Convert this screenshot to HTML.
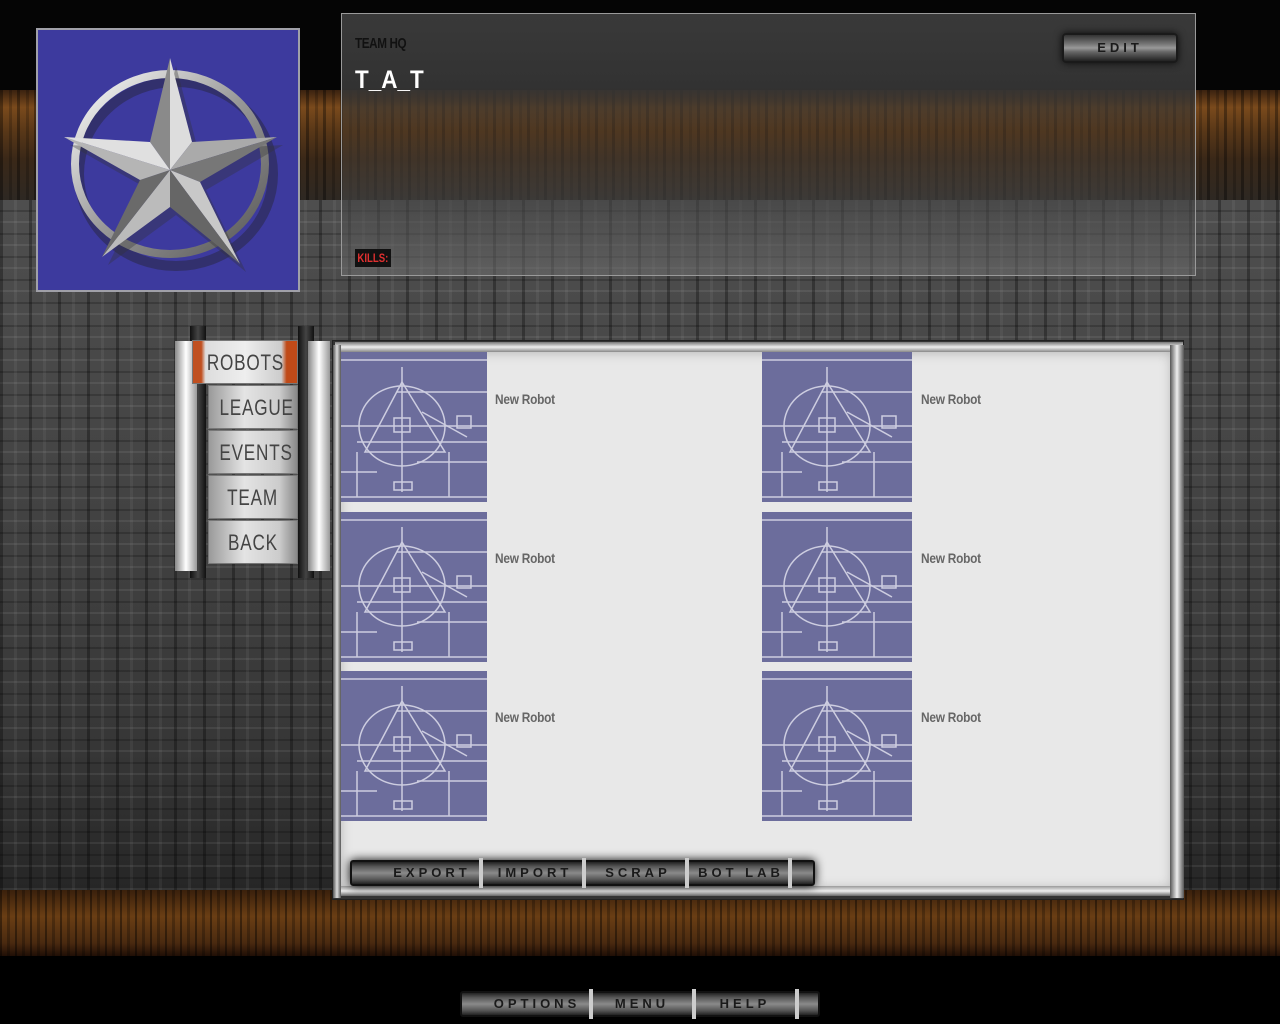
<!DOCTYPE html>
<html><head><meta charset="utf-8">
<style>
*{margin:0;padding:0;box-sizing:border-box}
body{width:1280px;height:1024px;background:#000;position:relative;overflow:hidden;font-family:"Liberation Sans",sans-serif}
.abs{position:absolute}
#bgtop{left:0;top:0;width:1280px;height:90px;background:#050505}
#band1{left:0;top:90px;width:1280px;height:115px;background:
repeating-linear-gradient(90deg,rgba(0,0,0,.35) 0 3px,transparent 3px 9px,rgba(0,0,0,.2) 9px 12px,transparent 12px 17px),
linear-gradient(180deg,#3a2210 0%,#7a4a1c 15%,#5a3818 35%,#3a2818 60%,#2c2824 100%)}
#circ{left:0;top:200px;width:1280px;height:690px;background:
repeating-linear-gradient(90deg,rgba(0,0,0,.3) 0 3px,transparent 3px 14px,rgba(255,255,255,.05) 14px 17px,transparent 17px 29px),
repeating-linear-gradient(0deg,rgba(255,255,255,.07) 0 2px,transparent 2px 11px,rgba(0,0,0,.2) 11px 13px,transparent 13px 23px),
linear-gradient(180deg,#4e4e4e 0%,#444 40%,#363636 80%,#262626 100%)}
#band2{left:0;top:890px;width:1280px;height:66px;background:
repeating-linear-gradient(90deg,rgba(0,0,0,.4) 0 2px,transparent 2px 7px,rgba(0,0,0,.25) 7px 10px,transparent 10px 15px),
linear-gradient(180deg,#3a200c,#6a3e14 40%,#4a2a10 80%,#200f06)}
#logo{left:36px;top:28px;width:264px;height:264px;background:#3d3a9e;border:2px solid #a0a0a8}
#hq{left:341px;top:13px;width:855px;height:263px;border:1px solid #9a9a9a;background:linear-gradient(180deg,rgba(60,60,60,.95) 0%,rgba(55,55,55,.9) 28%,rgba(70,55,40,.55) 45%,rgba(70,70,70,.6) 72%,rgba(110,110,110,.55) 100%)}
#hq .t1{position:absolute;left:13px;top:21px;font-size:15px;font-weight:bold;color:#111;letter-spacing:-.5px;transform:scaleX(.78);transform-origin:left}
#hq .t2{position:absolute;left:13px;top:52px;font-size:25px;font-weight:bold;color:#fff;transform:scaleX(.9);transform-origin:left}
#hq .k{position:absolute;left:13px;top:235px;background:#111;color:#e03030;font-size:12px;font-weight:bold;padding:2px 3px;transform:scaleX(.8);transform-origin:left}
.btn{background:linear-gradient(180deg,#333,#777 35%,#999 50%,#666 65%,#222);border:2px solid #1a1a1a;border-radius:4px;color:#1a1a1a;font-weight:bold;font-size:13px;letter-spacing:4px;text-align:center;box-shadow:0 0 8px rgba(0,0,0,.8)}
#edit{left:1062px;top:33px;width:116px;height:30px;line-height:26px}
#menu{left:170px;top:326px;width:165px;height:252px}
.rail{position:absolute;top:0;width:16px;height:252px;background:linear-gradient(90deg,#111,#444,#111)}
.post{position:absolute;top:15px;width:22px;height:230px;background:linear-gradient(90deg,#888,#fff 50%,#999)}
.mi{position:absolute;left:38px;width:90px;height:44px;background:linear-gradient(90deg,#9a9a9a,#e4e4e4 40%,#ccc 80%,#888);border:1px solid #777;color:#444;font-size:22px;text-align:center;line-height:44px;overflow:hidden}
.mi b{display:inline-block;font-weight:normal;transform:scaleX(.78);letter-spacing:1px}
#panel{left:332px;top:340px;width:852px;height:560px;background:#333;border:1px solid #222}
#inner{left:340px;top:352px;width:832px;height:537px;background:#e8e8e8;box-shadow:inset 0 0 12px rgba(0,0,0,.25)}
#frameL{left:333px;top:345px;width:8px;height:553px;background:linear-gradient(90deg,#555,#ddd 50%,#555)}
#frameR{left:1170px;top:345px;width:14px;height:553px;background:linear-gradient(90deg,#555,#eee 50%,#555)}
#frameT{left:335px;top:342px;width:848px;height:10px;background:linear-gradient(180deg,#777,#eee 50%,#888)}
#frameB{left:335px;top:886px;width:848px;height:10px;background:linear-gradient(180deg,#999,#eee 50%,#666)}
.bp{position:absolute;width:150px;height:150px;background:#6c6d9c}
.nr{position:absolute;font-size:14px;font-weight:bold;color:#666;transform:scaleX(.85);transform-origin:left;letter-spacing:-.3px}
.bar{position:absolute;height:26px;background:linear-gradient(180deg,#222,#555 20%,#8a8a8a 50%,#555 80%,#222);border:2px solid #111;border-radius:3px;box-shadow:0 0 10px #000}
.bar span{position:absolute;top:0;line-height:22px;font-size:13px;font-weight:bold;color:#1a1a1a;letter-spacing:4px;text-align:center}
.sep{position:absolute;top:-4px;width:4px;height:30px;background:#ccc}
</style></head><body>
<div class="abs" id="bgtop"></div>
<div class="abs" id="band1"></div>
<div class="abs" id="circ"></div>
<div class="abs" id="band2"></div>

<div class="abs" id="logo">
<svg width="260" height="260" viewBox="36 28 260 260" style="position:absolute;left:0;top:0">
<defs><linearGradient id="rg" x1="0" y1="0" x2="1" y2="1"><stop offset="0" stop-color="#fff"/><stop offset=".5" stop-color="#999"/><stop offset="1" stop-color="#555"/></linearGradient></defs>
<ellipse cx="170" cy="166" rx="97" ry="92" fill="none" stroke="#222" stroke-opacity=".4" stroke-width="10" transform="translate(4,6)"/>
<ellipse cx="168" cy="162" rx="95" ry="90" fill="none" stroke="url(#rg)" stroke-width="8"/>
<polygon points="168,56 190,140 275,135 198,180 238,262 168,205 100,255 138,178 62,135 148,140" fill="#333" opacity=".35" transform="translate(6,8)"/>
<polygon points="168,56 190,140 168,168" fill="#ddd"/><polygon points="168,56 148,140 168,168" fill="#8a8a8a"/>
<polygon points="275,135 190,140 168,168" fill="#aaa"/><polygon points="275,135 198,180 168,168" fill="#777"/>
<polygon points="238,262 198,180 168,168" fill="#c8c8c8"/><polygon points="238,262 168,205 168,168" fill="#666"/>
<polygon points="100,255 168,205 168,168" fill="#bbb"/><polygon points="100,255 138,178 168,168" fill="#6a6a6a"/>
<polygon points="62,135 138,178 168,168" fill="#b5b5b5"/><polygon points="62,135 148,140 168,168" fill="#e0e0e0"/>
</svg></div>

<div class="abs" id="hq"><div class="t1">TEAM HQ</div><div class="t2">T_A_T</div><div class="k">KILLS:</div></div>
<div class="abs btn" id="edit">EDIT</div>

<div class="abs" id="menu">
<div class="rail" style="left:20px"></div><div class="rail" style="left:128px"></div>
<div class="post" style="left:5px"></div><div class="post" style="left:138px"></div>
<div class="mi" style="left:22px;top:14px;width:106px;background:linear-gradient(90deg,#c05020 0 8%,#ddd 12%,#eee 50%,#ccc 85%,#c04a18 90%)"><b>ROBOTS</b></div>
<div class="mi" style="top:59px"><b>LEAGUE</b></div>
<div class="mi" style="top:104px"><b>EVENTS</b></div>
<div class="mi" style="top:149px"><b>TEAM</b></div>
<div class="mi" style="top:194px"><b>BACK</b></div>
</div>

<div class="abs" id="panel"></div>
<div class="abs" id="inner">
<svg width="0" height="0" style="position:absolute"><defs><g id="bpg" stroke="#e6e6f2" stroke-width="1.5" fill="none" opacity=".8"><ellipse cx="65" cy="74" rx="43" ry="40"/><line x1="65" y1="15" x2="65" y2="140"/><line x1="0" y1="74" x2="150" y2="74"/><line x1="20" y1="90" x2="150" y2="90"/><polyline points="65,30 28,100 108,100 65,30"/><line x1="0" y1="8" x2="150" y2="8"/><line x1="60" y1="40" x2="150" y2="40"/><line x1="0" y1="145" x2="150" y2="145"/><rect x="57" y="66" width="16" height="14"/><rect x="57" y="130" width="18" height="8"/><rect x="120" y="64" width="14" height="12"/><line x1="20" y1="100" x2="20" y2="145"/><line x1="112" y1="100" x2="112" y2="145"/><line x1="80" y1="110" x2="150" y2="110"/><line x1="0" y1="120" x2="40" y2="120"/><line x1="85" y1="60" x2="130" y2="85"/></g></defs></svg>
<div class="bp" style="left:-3px;top:0"><svg width="150" height="150"><use href="#bpg"/></svg></div>
<div class="bp" style="left:422px;top:0"><svg width="150" height="150"><use href="#bpg"/></svg></div>
<div class="bp" style="left:-3px;top:160px"><svg width="150" height="150"><use href="#bpg"/></svg></div>
<div class="bp" style="left:422px;top:160px"><svg width="150" height="150"><use href="#bpg"/></svg></div>
<div class="bp" style="left:-3px;top:319px"><svg width="150" height="150"><use href="#bpg"/></svg></div>
<div class="bp" style="left:422px;top:319px"><svg width="150" height="150"><use href="#bpg"/></svg></div>
<div class="nr" style="left:155px;top:39px">New Robot</div>
<div class="nr" style="left:581px;top:39px">New Robot</div>
<div class="nr" style="left:155px;top:198px">New Robot</div>
<div class="nr" style="left:581px;top:198px">New Robot</div>
<div class="nr" style="left:155px;top:357px">New Robot</div>
<div class="nr" style="left:581px;top:357px">New Robot</div>
</div>
<div class="abs" id="frameT"></div><div class="abs" id="frameB"></div><div class="abs" id="frameL"></div><div class="abs" id="frameR"></div>

<div class="bar" style="left:350px;top:860px;width:465px">
<span style="left:30px;width:100px">EXPORT</span><div class="sep" style="left:127px"></div>
<span style="left:133px;width:100px">IMPORT</span><div class="sep" style="left:230px"></div>
<span style="left:236px;width:100px">SCRAP</span><div class="sep" style="left:333px"></div>
<span style="left:339px;width:100px">BOT LAB</span><div class="sep" style="left:436px"></div>
</div>
<div class="bar" style="left:460px;top:991px;width:360px">
<span style="left:25px;width:100px">OPTIONS</span><div class="sep" style="left:127px"></div>
<span style="left:130px;width:100px">MENU</span><div class="sep" style="left:230px"></div>
<span style="left:233px;width:100px">HELP</span><div class="sep" style="left:333px"></div>
</div>
</body></html>
